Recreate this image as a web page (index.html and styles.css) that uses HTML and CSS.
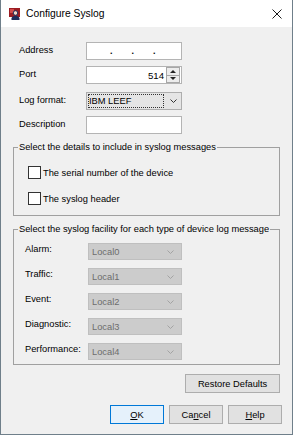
FILE: index.html
```html
<!DOCTYPE html>
<html lang="en">
<head>
    <meta charset="UTF-8">
    <title>Configure Syslog</title>
    <link rel="stylesheet" href="styles.css">
</head>
<body>
    <div class="window">
        <div class="titlebar">
            <svg class="app-icon" width="11" height="12" viewBox="0 0 11 12">
                <rect x="0" y="0" width="11" height="9" fill="#9b1c22"></rect>
                <rect x="1" y="1" width="4" height="4" fill="#d24a4a"></rect>
                <circle cx="6.5" cy="5" r="2.3" fill="#f2d6c6" stroke="#1d2c5a" stroke-width="1"></circle>
                <path d="M2.5 12v-1.5c0-1.6 1.8-2.8 4-2.8s4 1.2 4 2.8V12z" fill="#1d2c5a"></path>
            </svg>
            <span class="title">Configure Syslog</span>
            <svg class="close" width="10" height="10" viewBox="0 0 10 10">
                <path d="M0.5 0.5l9 9M9.5 0.5l-9 9" stroke="#1a1a1a" stroke-width="1"></path>
            </svg>
        </div>

        <div class="content">
            <div class="fields">
                <div class="field-row">
                    <span class="field-label">Address</span>
                    <div class="textbox ip-field">
                        <span>.</span><span>.</span><span>.</span>
                    </div>
                </div>
                <div class="field-row">
                    <span class="field-label">Port</span>
                    <div class="textbox spinner">
                        <span class="spin-value">514</span>
                        <div class="spin-buttons">
                            <span class="spin-btn up"></span>
                            <span class="spin-btn down"></span>
                        </div>
                    </div>
                </div>
                <div class="field-row format-row">
                    <span class="field-label">Log format:</span>
                    <div class="combo active">
                        <span class="combo-text">IBM LEEF</span>
                        <span class="combo-arrow">
                            <svg width="7" height="4" viewBox="0 0 7 4"><path d="M0.5 0.5l3 3 3-3" fill="none" stroke="#333" stroke-width="1"></path></svg>
                        </span>
                    </div>
                </div>
                <div class="field-row">
                    <span class="field-label">Description</span>
                    <div class="textbox"></div>
                </div>
            </div>

            <fieldset class="group details">
                <legend>Select the details to include in syslog messages</legend>
                <label class="check"><span class="check-box"></span>The serial number of the device</label>
                <label class="check"><span class="check-box"></span>The syslog header</label>
            </fieldset>

            <fieldset class="group facility">
                <legend>Select the syslog facility for each type of device log message</legend>
                <div class="facility-grid">
                    <span class="facility-label">Alarm:</span>
                    <div class="combo disabled"><span class="combo-text">Local0</span><span class="combo-arrow"><svg width="7" height="4" viewBox="0 0 7 4"><path d="M0.5 0.5l3 3 3-3" fill="none" stroke="#a3a3a3" stroke-width="1"></path></svg></span></div>
                    <span class="facility-label">Traffic:</span>
                    <div class="combo disabled"><span class="combo-text">Local1</span><span class="combo-arrow"><svg width="7" height="4" viewBox="0 0 7 4"><path d="M0.5 0.5l3 3 3-3" fill="none" stroke="#a3a3a3" stroke-width="1"></path></svg></span></div>
                    <span class="facility-label">Event:</span>
                    <div class="combo disabled"><span class="combo-text">Local2</span><span class="combo-arrow"><svg width="7" height="4" viewBox="0 0 7 4"><path d="M0.5 0.5l3 3 3-3" fill="none" stroke="#a3a3a3" stroke-width="1"></path></svg></span></div>
                    <span class="facility-label">Diagnostic:</span>
                    <div class="combo disabled"><span class="combo-text">Local3</span><span class="combo-arrow"><svg width="7" height="4" viewBox="0 0 7 4"><path d="M0.5 0.5l3 3 3-3" fill="none" stroke="#a3a3a3" stroke-width="1"></path></svg></span></div>
                    <span class="facility-label">Performance:</span>
                    <div class="combo disabled"><span class="combo-text">Local4</span><span class="combo-arrow"><svg width="7" height="4" viewBox="0 0 7 4"><path d="M0.5 0.5l3 3 3-3" fill="none" stroke="#a3a3a3" stroke-width="1"></path></svg></span></div>
                </div>
            </fieldset>

            <div class="restore-row">
                <button type="button" class="btn restore">Restore Defaults</button>
            </div>

            <div class="actions">
                <button type="button" class="btn default"><u>O</u>K</button>
                <button type="button" class="btn">Ca<u>n</u>cel</button>
                <button type="button" class="btn"><u>H</u>elp</button>
            </div>
        </div>
    </div>
</body>
</html>
```

FILE: styles.css
```css
* {
    margin: 0;
    padding: 0;
    box-sizing: border-box;
}

body {
    background-color: #ffffff;
    font-family: "Liberation Sans", Arial, sans-serif;
    font-size: 9.3px;
    color: #000;
}

.window {
    width: 293px;
    height: 435px;
    border: 1px solid #6f7f8a;
    border-top: none;
    background-color: #f0f0f0;
    display: flex;
    flex-direction: column;
}

.titlebar {
    height: 27px;
    flex-shrink: 0;
    background-color: #ffffff;
    display: flex;
    align-items: center;
    padding-left: 8px;
    padding-right: 10px;
}

.app-icon {
    margin-top: 1px;
}

.title {
    margin-left: 6px;
    font-size: 10.3px;
    flex: 1;
}

.close {
    margin-top: 1px;
}

.content {
    padding: 15px 12px 0 12px;
}

/* top fields */
.fields {
    display: flex;
    flex-direction: column;
    gap: 6px;
    padding-left: 6px;
}

.field-row {
    display: flex;
    align-items: center;
    height: 18px;
}

.format-row {
    margin-top: 2px;
}

.field-label {
    width: 67px;
    margin-top: -3px;
}

.textbox {
    width: 96px;
    height: 18px;
    background-color: #fff;
    border: 1px solid #b4b4b4;
}

.ip-field {
    display: flex;
    padding-left: 23px;
    gap: 19px;
    font-weight: bold;
    line-height: 17px;
    font-size: 9px;
}

.spinner {
    display: flex;
    align-items: center;
    justify-content: flex-end;
}

.spin-value {
    margin-right: 2px;
    font-size: 9.6px;
}

.spin-buttons {
    display: flex;
    flex-direction: column;
    width: 14px;
    height: 16px;
    margin-right: 1px;
}

.spin-btn {
    flex: 1;
    border: 1px solid #a7a7a7;
    background-color: #ececec;
    display: flex;
    align-items: center;
    justify-content: center;
}

.spin-btn.down {
    border-top: none;
}

.spin-btn::after {
    content: "";
    border-left: 3px solid transparent;
    border-right: 3px solid transparent;
}

.spin-btn.up::after {
    border-bottom: 3px solid #222;
}

.spin-btn.down::after {
    border-top: 3px solid #222;
}

.combo {
    width: 96px;
    height: 18px;
    display: flex;
    align-items: stretch;
    border: 1px solid #adadad;
    background-color: #e5e5e5;
}

.combo-text {
    flex: 1;
    display: flex;
    align-items: center;
    padding-left: 3px;
}

.combo.active .combo-text {
    margin: 1px;
    padding-left: 1px;
    outline: 1px dotted #333;
    outline-offset: -1px;
}

.combo-arrow {
    width: 16px;
    display: flex;
    align-items: center;
    justify-content: center;
}

.combo.disabled {
    width: 94px;
    height: 17px;
    background-color: #cccccc;
    border-color: #bfbfbf;
    color: #6d6d6d;
}

.combo.disabled .combo-text {
    padding-left: 3px;
}

.combo.disabled .combo-arrow {
    width: 22px;
}

/* group boxes */
.group {
    border: 1px solid #a0a0a0;
    margin: 0;
    padding: 0 2px 0 4px;
    min-width: 0;
}

.group legend {
    padding: 0 1px;
    line-height: 11px;
    white-space: nowrap;
}

.details {
    margin-top: 8px;
    padding-bottom: 10px;
    display: flex;
    flex-direction: column;
}

.check {
    display: flex;
    align-items: center;
    margin-left: 10px;
    margin-top: 13px;
    height: 13px;
}

.check-box {
    width: 13px;
    height: 13px;
    border: 1px solid #333;
    background-color: #fff;
    margin-right: 2px;
}

.facility {
    margin-top: 8px;
    padding-bottom: 4px;
}

.facility-grid {
    display: grid;
    grid-template-columns: 63px 94px;
    row-gap: 8px;
    padding-left: 7px;
    padding-top: 8px;
    align-items: center;
}

.facility-label {
    margin-top: -5px;
}

/* buttons */
.btn {
    font-family: "Liberation Sans", Arial, sans-serif;
    font-size: 9.3px;
    color: #000;
    background-color: #e1e1e1;
    border: 1px solid #adadad;
    height: 19px;
}

.btn u {
    text-decoration-thickness: 1px;
    text-underline-offset: 1px;
}

.restore-row {
    display: flex;
    justify-content: flex-end;
    margin-top: 9px;
}

.restore {
    width: 95px;
}

.actions {
    display: flex;
    justify-content: flex-end;
    gap: 5px;
    margin-top: 12px;
    margin-right: -2px;
}

.actions .btn {
    width: 54px;
}

.btn.default {
    border-color: #0078d7;
    background-color: #e5f1fb;
}
```
